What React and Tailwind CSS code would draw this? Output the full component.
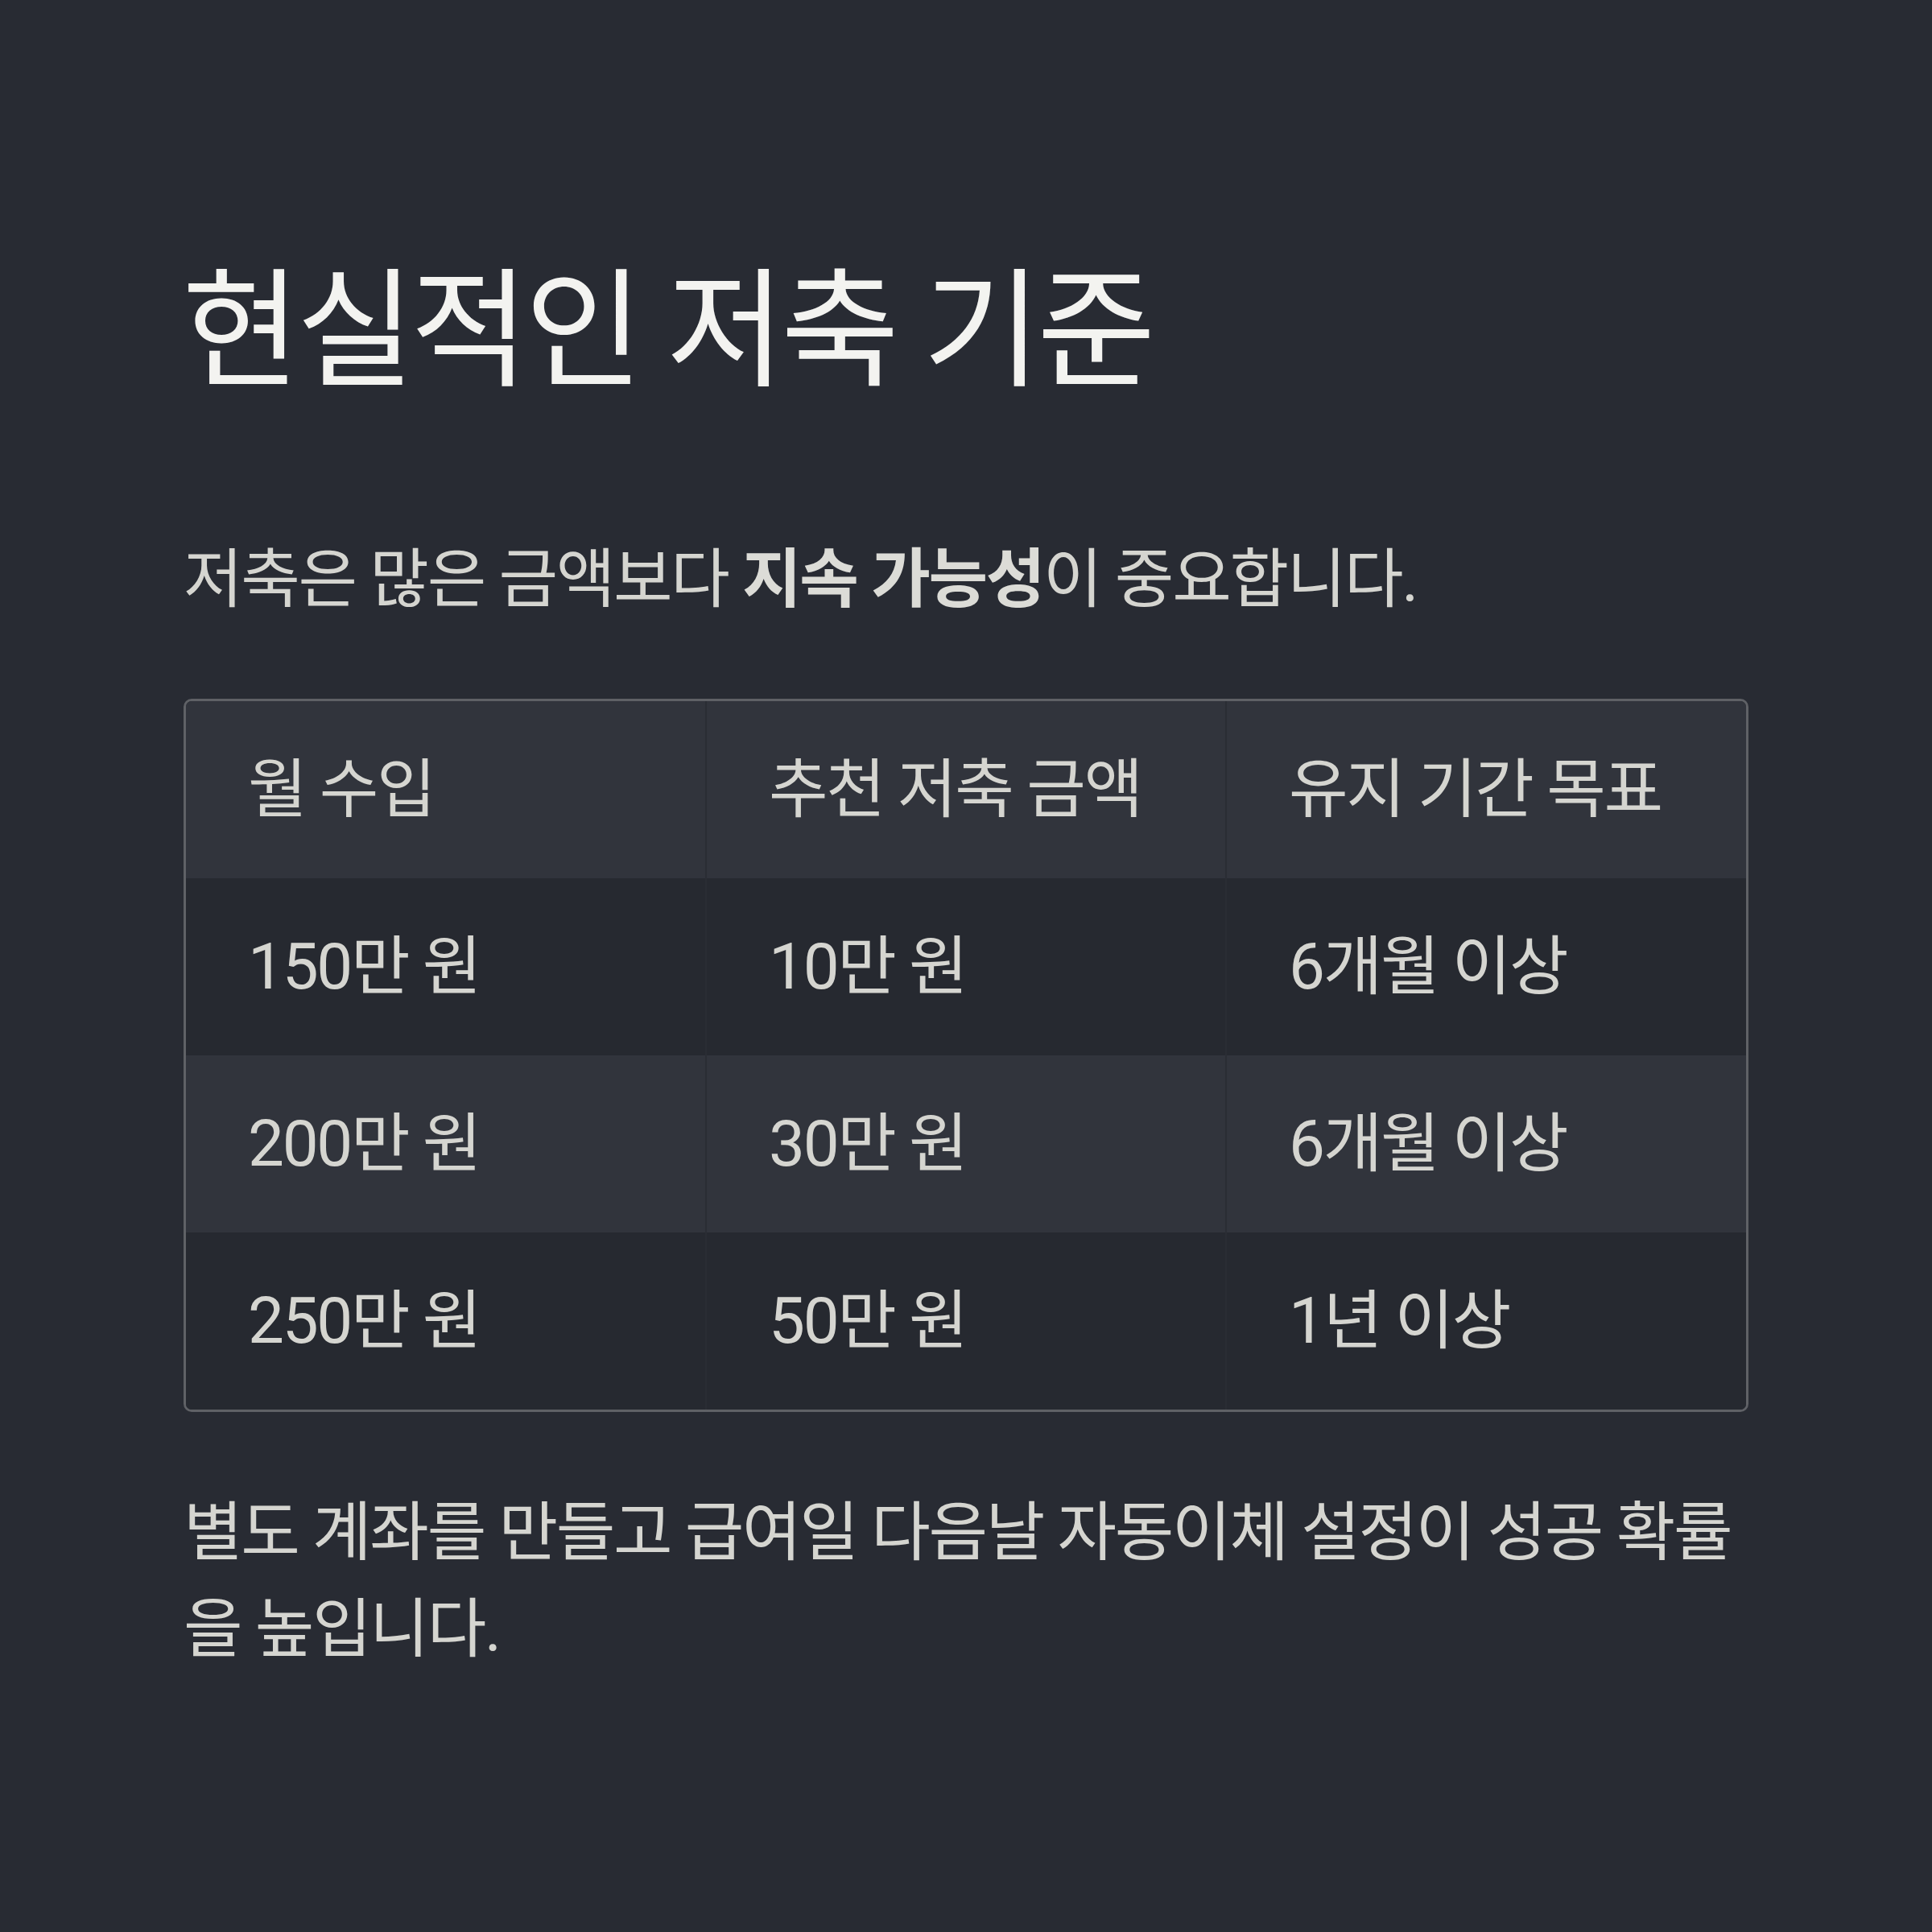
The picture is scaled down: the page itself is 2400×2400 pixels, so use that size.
import React from 'react';

const rows = [
  ['150만 원', '10만 원', '6개월 이상'],
  ['200만 원', '30만 원', '6개월 이상'],
  ['250만 원', '50만 원', '1년 이상'],
];

const App = () => {
  return (
    <div className="min-h-[2400px] w-[2400px] bg-[#282b33] px-[228px] pt-[317px] font-['Roboto','Noto_Sans_CJK_KR',sans-serif]">
      <h1 className="-ml-[2px] text-[160px] leading-[1.2] font-normal tracking-[-0.033em] text-[#f3f3f0]">현실적인 저축 기준</h1>

      <p className="mt-[151px] text-[80px] leading-[1.5] tracking-[-0.029em] text-[#d5d5d0]">
        저축은 많은 금액보다 <strong className="font-bold text-[#dcdcd7]">지속 가능성</strong>이 중요합니다.
      </p>

      <div className="mt-[88px] overflow-hidden rounded-[10px] border-[3px] border-[#5f6166]">
        <table className="w-full table-fixed border-collapse text-[80px] leading-[1.5] tracking-[-0.029em] text-[#d5d5d0]">
          <thead>
            <tr className="bg-[#31343c]">
              <th className="px-[77px] py-[50px] text-left font-normal">월 수입</th>
              <th className="border-l-2 border-[#2a2d34] px-[77px] py-[50px] text-left font-normal">추천 저축 금액</th>
              <th className="border-l-2 border-[#2a2d34] px-[77px] py-[50px] text-left font-normal">유지 기간 목표</th>
            </tr>
          </thead>
          <tbody>
            {rows.map((row, i) => (
              <tr key={i} className={i % 2 === 0 ? 'bg-[#262930]' : 'bg-[#31343c]'}>
                {row.map((cell, j) => (
                  <td
                    key={j}
                    className={`px-[77px] py-[50px] ${j > 0 ? 'border-l-2 border-[#2a2d34]' : ''}`}
                  >
                    {cell}
                  </td>
                ))}
              </tr>
            ))}
          </tbody>
        </table>
      </div>

      <p className="mt-[90px] text-[80px] leading-[1.5] tracking-[-0.029em] text-[#d5d5d0]">
        별도 계좌를 만들고 급여일 다음날 자동이체 설정이 성공 확률을 높입니다.
      </p>
    </div>
  );
};

export default App;
